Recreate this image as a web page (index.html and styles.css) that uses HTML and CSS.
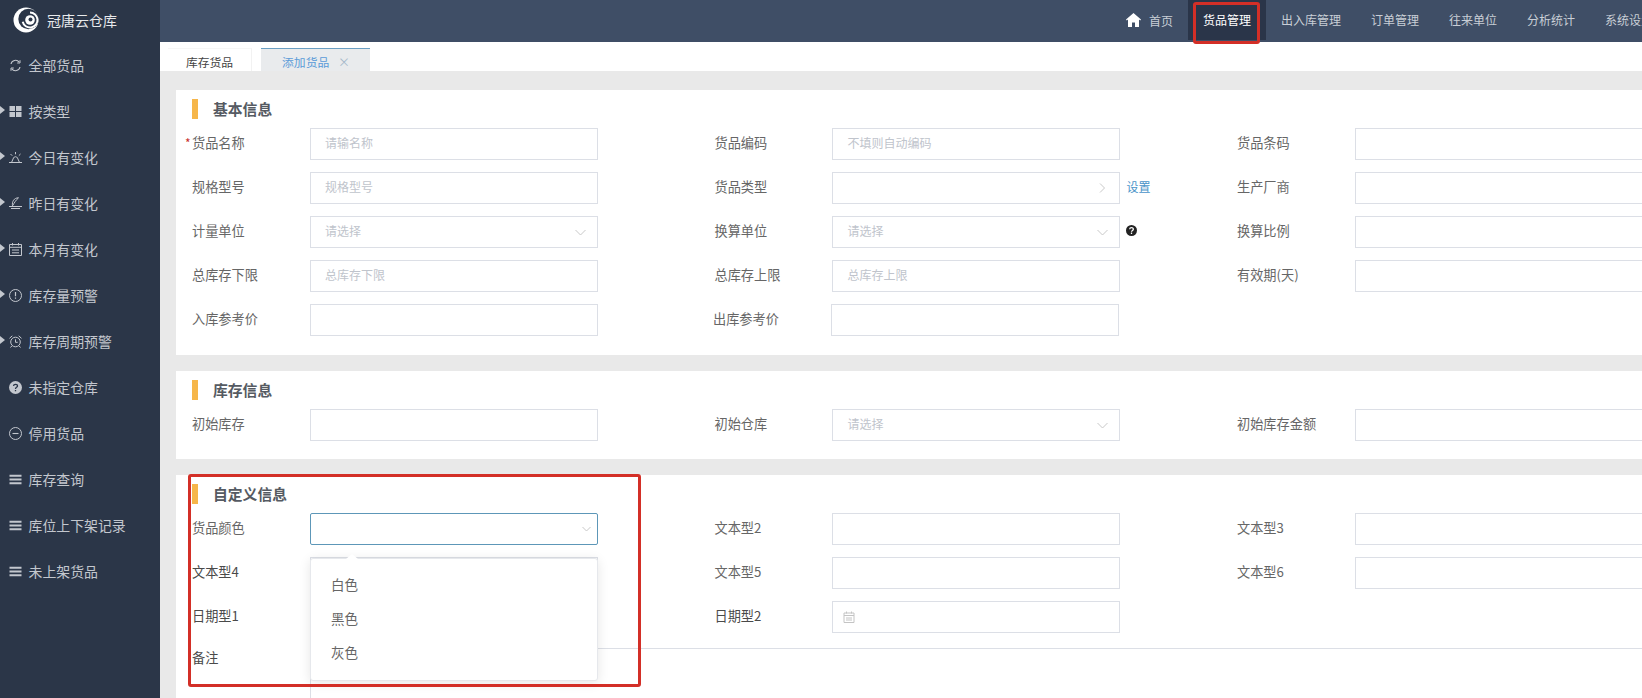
FILE: index.html
```html
<!DOCTYPE html>
<html lang="zh-CN">
<head>
    <meta charset="UTF-8">
    <meta name="viewport" content="width=device-width, initial-scale=1.0">
    <title>冠唐云仓库 - 添加货品</title>
    <link rel="stylesheet" href="styles.css">
</head>
<body>
    <div class="app">
        <aside class="sidebar">
            <div class="logo">
                <svg class="logo-mark" width="26" height="26" viewBox="0 0 26 26">
                    <circle cx="13" cy="13" r="12.500" fill="#fff"/>
                    <circle cx="15.500" cy="12" r="10.200" fill="#2b3648"/>
                    <path d="M17 5.500a7.500 7.500 0 1 1-7.300 9.200" fill="none" stroke="#fff" stroke-width="2"/>
                    <circle cx="17" cy="13" r="4.800" fill="#fff"/>
                    <circle cx="17.500" cy="12.500" r="2" fill="#2b3648"/>
                </svg>
                <span>冠唐云仓库</span>
            </div>
            <ul class="menu">
                <li>
                    <svg class="menu-icon" viewBox="0 0 13 13"><path d="M2 5A4.600 4.600 0 0 1 10.200 3.200M11 8A4.600 4.600 0 0 1 2.800 9.800" fill="none" stroke="currentColor" stroke-width="1.100"/><path d="M11 1.200v2.800H8.200M2 11.800V9h2.800" fill="none" stroke="currentColor"/></svg>
                    全部货品
                </li>
                <li class="has-sub">
                    <svg class="menu-icon" viewBox="0 0 13 13"><path d="M.5 1h5.500v5H.5zM7 1h5.500v5H7zM.5 7h5.500v5H.5zM7 7h5.500v5H7z" fill="currentColor"/></svg>
                    按类型
                </li>
                <li class="has-sub">
                    <svg class="menu-icon" viewBox="0 0 13 13"><path d="M0 11.500h13M2.500 11.500 4.500 7a2.200 2.200 0 0 1 4 0l2 4.500M6.500 1v2.300M1.500 3l1.700 1.700M11.500 3 9.800 4.700" fill="none" stroke="currentColor"/></svg>
                    今日有变化
                </li>
                <li class="has-sub">
                    <svg class="menu-icon" viewBox="0 0 13 13"><path d="M9.500.8C5 .8 2.800 4.600 3.500 8.800 5.500 5.500 7 3 9.500.8ZM0 9.500h13M2 11.500h9" fill="none" stroke="currentColor"/></svg>
                    昨日有变化
                </li>
                <li class="has-sub">
                    <svg class="menu-icon" viewBox="0 0 13 13"><path d="M.5 1.500h12v11H.5zM.5 4.300h12M3.500 0v2.500M9.500 0v2.500M3 7h7M3 9.800h7" fill="none" stroke="currentColor"/></svg>
                    本月有变化
                </li>
                <li class="has-sub">
                    <svg class="menu-icon" viewBox="0 0 13 13"><circle cx="6.500" cy="6.500" r="6" fill="none" stroke="currentColor"/><path d="M6.500 3v4.300M6.500 8.500v1.300" stroke="currentColor" stroke-width="1.200"/></svg>
                    库存量预警
                </li>
                <li class="has-sub">
                    <svg class="menu-icon" viewBox="0 0 13 13"><circle cx="6.500" cy="7" r="4.800" fill="none" stroke="currentColor"/><path d="M6.500 4.300v3h2.200M.5 3.300 3.300.8M12.500 3.300 9.700.8M2.800 11l-1.300 1.500M10.200 11l1.300 1.500" fill="none" stroke="currentColor"/></svg>
                    库存周期预警
                </li>
                <li>
                    <svg class="menu-icon" viewBox="0 0 13 13"><circle cx="6.500" cy="6.500" r="6.500" fill="currentColor"/><path d="M4.500 5C4.600 2.800 8.500 2.800 8.500 5 8.500 6.400 6.500 6.300 6.500 7.900M6.500 8.900v1.400" fill="none" stroke="#2b3648" stroke-width="1.300"/></svg>
                    未指定仓库
                </li>
                <li>
                    <svg class="menu-icon" viewBox="0 0 13 13"><circle cx="6.500" cy="6.500" r="6" fill="none" stroke="currentColor"/><path d="M3.500 6.500h6" stroke="currentColor" stroke-width="1.100"/></svg>
                    停用货品
                </li>
                <li>
                    <svg class="menu-icon" viewBox="0 0 13 13"><path d="M.5 2.700h12M.5 6.500h12M.5 10.300h12" stroke="currentColor" stroke-width="1.900"/></svg>
                    库存查询
                </li>
                <li>
                    <svg class="menu-icon" viewBox="0 0 13 13"><path d="M.5 2.700h12M.5 6.500h12M.5 10.300h12" stroke="currentColor" stroke-width="1.900"/></svg>
                    库位上下架记录
                </li>
                <li>
                    <svg class="menu-icon" viewBox="0 0 13 13"><path d="M.5 2.700h12M.5 6.500h12M.5 10.300h12" stroke="currentColor" stroke-width="1.900"/></svg>
                    未上架货品
                </li>
            </ul>
        </aside>

        <div class="main">
            <nav class="topbar">
                <a class="nav-item nav-home">
                    <svg width="15" height="14" viewBox="0 0 15 14"><path d="M7.500 0 15 6.500l-.8 1L13 6.600V14H9V9.500H6V14H2V6.600L.8 7.500 0 6.500Z" fill="#fff"/></svg>
                    首页
                </a>
                <a class="nav-item active">货品管理<span class="mark mark-nav"></span></a>
                <a class="nav-item">出入库管理</a>
                <a class="nav-item">订单管理</a>
                <a class="nav-item">往来单位</a>
                <a class="nav-item">分析统计</a>
                <a class="nav-item">系统设置</a>
            </nav>

            <div class="tabs">
                <div class="tab">库存货品</div>
                <div class="tab tab-current">添加货品 <span class="tab-close">×</span></div>
            </div>

            <div class="content">
                <section class="card">
                    <h3 class="card-title">基本信息</h3>
                    <div class="form-row">
                        <div class="field">
                            <label class="required">货品名称</label>
                            <div class="control placeholder">请输名称</div>
                        </div>
                        <div class="field">
                            <label>货品编码</label>
                            <div class="control placeholder">不填则自动编码</div>
                        </div>
                        <div class="field">
                            <label>货品条码</label>
                            <div class="control"></div>
                        </div>
                    </div>
                    <div class="form-row">
                        <div class="field">
                            <label>规格型号</label>
                            <div class="control placeholder">规格型号</div>
                        </div>
                        <div class="field">
                            <label>货品类型</label>
                            <div class="control">
                                <svg class="caret caret-side" width="7" height="10" viewBox="0 0 7 10"><path d="m1 .5 4.500 4.500L1 9.500" fill="none" stroke="#c8c8c8"/></svg>
                                <a class="field-link">设置</a>
                            </div>
                        </div>
                        <div class="field">
                            <label>生产厂商</label>
                            <div class="control"></div>
                        </div>
                    </div>
                    <div class="form-row">
                        <div class="field">
                            <label>计量单位</label>
                            <div class="control placeholder">请选择
                                <svg class="caret" width="11" height="7" viewBox="0 0 11 7"><path d="m.5 1 5 5 5-5" fill="none" stroke="#c8c8c8"/></svg>
                            </div>
                        </div>
                        <div class="field">
                            <label>换算单位</label>
                            <div class="control placeholder">请选择
                                <svg class="caret" width="11" height="7" viewBox="0 0 11 7"><path d="m.5 1 5 5 5-5" fill="none" stroke="#c8c8c8"/></svg>
                                <svg class="field-help" width="11" height="11" viewBox="0 0 12 12"><circle cx="6" cy="6" r="6" fill="#222"/><path d="M4 4.600C4.100 2.400 8 2.400 8 4.600 8 6 6 5.900 6 7.400M6 8.300v1.400" fill="none" stroke="#fff" stroke-width="1.400"/></svg>
                            </div>
                        </div>
                        <div class="field">
                            <label>换算比例</label>
                            <div class="control"></div>
                        </div>
                    </div>
                    <div class="form-row">
                        <div class="field">
                            <label>总库存下限</label>
                            <div class="control placeholder">总库存下限</div>
                        </div>
                        <div class="field">
                            <label>总库存上限</label>
                            <div class="control placeholder">总库存上限</div>
                        </div>
                        <div class="field">
                            <label>有效期(天)</label>
                            <div class="control"></div>
                        </div>
                    </div>
                    <div class="form-row">
                        <div class="field">
                            <label>入库参考价</label>
                            <div class="control"></div>
                        </div>
                        <div class="field field-nudge">
                            <label>出库参考价</label>
                            <div class="control"></div>
                        </div>
                    </div>
                </section>

                <section class="card">
                    <h3 class="card-title">库存信息</h3>
                    <div class="form-row">
                        <div class="field">
                            <label>初始库存</label>
                            <div class="control"></div>
                        </div>
                        <div class="field">
                            <label>初始仓库</label>
                            <div class="control placeholder">请选择
                                <svg class="caret" width="11" height="7" viewBox="0 0 11 7"><path d="m.5 1 5 5 5-5" fill="none" stroke="#c8c8c8"/></svg>
                            </div>
                        </div>
                        <div class="field">
                            <label>初始库存金额</label>
                            <div class="control"></div>
                        </div>
                    </div>
                </section>

                <section class="card card-last">
                    <span class="mark mark-custom"></span>
                    <h3 class="card-title">自定义信息</h3>
                    <div class="form-row">
                        <div class="field">
                            <label>货品颜色</label>
                            <div class="control control-focus">
                                <svg class="caret caret-small" width="9" height="6" viewBox="0 0 9 6"><path d="m.5 1 4 4 4-4" fill="none" stroke="#c8c8c8"/></svg>
                                <div class="popup">
                                    <ul>
                                        <li>白色</li>
                                        <li>黑色</li>
                                        <li>灰色</li>
                                    </ul>
                                </div>
                            </div>
                        </div>
                        <div class="field">
                            <label>文本型2</label>
                            <div class="control"></div>
                        </div>
                        <div class="field">
                            <label>文本型3</label>
                            <div class="control"></div>
                        </div>
                    </div>
                    <div class="form-row">
                        <div class="field">
                            <label class="label-dark">文本型4</label>
                            <div class="control"></div>
                        </div>
                        <div class="field">
                            <label>文本型5</label>
                            <div class="control"></div>
                        </div>
                        <div class="field">
                            <label>文本型6</label>
                            <div class="control"></div>
                        </div>
                    </div>
                    <div class="form-row">
                        <div class="field">
                            <label class="label-dark">日期型1</label>
                            <div class="control"></div>
                        </div>
                        <div class="field">
                            <label class="label-dark">日期型2</label>
                            <div class="control">
                                <svg class="date-icon" width="12" height="12" viewBox="0 0 12 12"><path d="M1 2h10v9.500H1zM1 4.500h10M3.500.5v2M8.500.5v2M3 7h6M3 9h6" fill="none" stroke="#c4c4c4"/></svg>
                            </div>
                        </div>
                    </div>
                    <div class="remark-row">
                        <label class="label-dark">备注</label>
                        <div class="remark-box"></div>
                    </div>
                </section>
            </div>
        </div>
    </div>
</body>
</html>
```

FILE: styles.css
```css
* {
    box-sizing: border-box;
}
body {
    margin: 0;
    height: 698px;
    overflow: hidden;
    font-family: "Noto Sans CJK SC", "Liberation Sans", sans-serif;
    background-color: #e9e9e9;
}
ul {
    list-style-type: none;
    margin: 0;
    padding: 0;
}
.app {
    display: flex;
    height: 698px;
}

/* left menu */
.sidebar {
    flex: none;
    width: 160px;
    background-color: #2b3648;
    color: #c3c7ce;
}
.logo {
    display: flex;
    align-items: center;
    height: 42px;
    padding: 0 0 2px 13px;
    color: #e8eaec;
    font-size: 14px;
}
.logo-mark {
    margin-right: 8px;
}
.menu {
    padding-top: 1px;
}
.menu li {
    position: relative;
    display: flex;
    align-items: center;
    height: 46px;
    padding: 0 0 2px 9px;
    font-size: 13.900px;
}
.menu li.has-sub::before {
    content: "";
    position: absolute;
    left: 0;
    top: 17px;
    border-left: 5px solid #c3c7ce;
    border-top: 4px solid transparent;
    border-bottom: 4px solid transparent;
}
.menu-icon {
    flex: none;
    width: 13px;
    height: 13px;
    margin-right: 6.500px;
}

/* top bar */
.main {
    flex: 1;
    min-width: 0;
    overflow: hidden;
}
.topbar {
    display: flex;
    align-items: flex-start;
    height: 42px;
    padding-left: 951px;
    background-color: #3f4e66;
    white-space: nowrap;
}
.nav-item {
    position: relative;
    flex: none;
    height: 40px;
    padding: 0 15px;
    line-height: 39px;
    font-size: 12px;
    color: #c9ced6;
}
.nav-item.active {
    background-color: #2a3549;
    color: #fff;
}
.nav-home {
    display: flex;
    align-items: center;
    gap: 8px;
}

/* tabs */
.tabs {
    display: flex;
    align-items: flex-end;
    height: 29px;
    padding-left: 8px;
    background-color: #fff;
}
.tab {
    width: 84px;
    height: 23px;
    margin-right: 9px;
    line-height: 25px;
    text-align: center;
    font-size: 11.800px;
    color: #444;
    border-right: 1px solid #f2f2f2;
    border-top: 1px solid #f6f6f6;
}
.tab-current {
    width: 109px;
    padding-left: 1px;
    color: #5b9bd8;
    background-color: #e9ebed;
    border: 0;
    border-top: 1px solid #6a9fc4;
}
.tab-close {
    margin-left: 6px;
    color: #a5b8ca;
    font-size: 12px;
}

/* form cards */
.content {
    padding: 19px 0 0 16px;
}
.card {
    position: relative;
    height: 265px;
    margin-bottom: 16px;
    padding: 9px 0 0 16px;
    background-color: #fff;
}
.card:nth-child(2) {
    height: 88px;
}
.card-title {
    height: 20px;
    margin: 0 0 9px;
    padding-left: 15px;
    line-height: 20px;
    font-size: 14.800px;
    font-weight: 700;
    color: #555a62;
    border-left: 6px solid #f6b64a;
}
.form-row {
    display: flex;
    height: 32px;
    margin-bottom: 12px;
}
.field {
    flex: none;
    display: flex;
    align-items: center;
    width: 522.500px;
}
.field-nudge {
    margin-left: -1.500px;
}
.field label {
    position: relative;
    flex: none;
    width: 118px;
    padding-bottom: 3px;
    font-size: 13.200px;
    color: #666;
}
.field:nth-child(2) label {
    width: 117px;
}
.field-nudge:nth-child(2) label {
    width: 118px;
}
.field label.label-dark,
.remark-row .label-dark {
    color: #4a4a4a;
}
.required::before {
    content: "*";
    position: absolute;
    left: -7px;
    top: 1px;
    color: #c9302c;
    font-size: 12px;
}
.control {
    position: relative;
    flex: none;
    width: 288px;
    height: 32px;
    padding-left: 14px;
    line-height: 28px;
    font-size: 12px;
    border: 1px solid #dcdfe6;
    background-color: #fff;
}
.field:nth-child(2) .control {
    padding-left: 15px;
}
.placeholder {
    color: #c0c4cc;
}
.control-focus {
    border-color: #5d97b8;
    border-radius: 2px;
}
.caret {
    position: absolute;
    right: 11px;
    top: 12px;
}
.caret-side {
    right: 13px;
    top: 10px;
}
.caret-small {
    right: 6px;
}
.field-link {
    position: absolute;
    left: 294px;
    top: 0;
    font-size: 12px;
    color: #4a94c9;
    white-space: nowrap;
}
.field-help {
    position: absolute;
    left: 293px;
    top: 8px;
}
.date-icon {
    position: absolute;
    left: 10px;
    top: 9px;
}

/* colour dropdown */
.popup {
    position: absolute;
    z-index: 2;
    left: -1px;
    top: 44px;
    width: 288px;
    height: 123px;
    padding-top: 8px;
    background-color: #fff;
    border: 1px solid #e6e8ec;
    border-radius: 3px;
    box-shadow: 0 2px 12px rgba(0, 0, 0, 0.1);
}
.popup::before {
    content: "";
    position: absolute;
    left: 35px;
    top: -5px;
    border-left: 6px solid transparent;
    border-right: 6px solid transparent;
    border-bottom: 5px solid #fff;
}
.popup li {
    height: 34px;
    padding-left: 20px;
    line-height: 34px;
    font-size: 13.500px;
    color: #666;
}

/* remark */
.remark-row {
    display: flex;
    margin-top: 16px;
    font-size: 13.200px;
}
.remark-row label {
    flex: none;
    width: 118px;
    line-height: 18px;
}
.remark-box {
    flex: 1;
    height: 80px;
    margin: -1px -4px 0 0;
    border: 1px solid #dcdfe6;
}

/* red annotation boxes drawn on the screenshot */
.mark {
    position: absolute;
    z-index: 3;
    border: 3px solid #d32f27;
    border-radius: 3px;
    pointer-events: none;
}
.mark-nav {
    left: 5px;
    top: 2px;
    width: 67px;
    height: 42px;
}
.mark-custom {
    left: 12px;
    top: -1px;
    width: 453px;
    height: 213px;
}
```
